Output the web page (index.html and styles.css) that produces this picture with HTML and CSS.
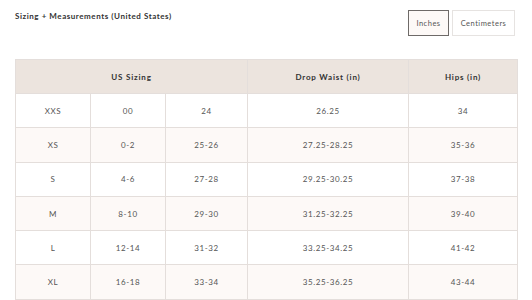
FILE: index.html
```html
<!DOCTYPE html>
<html>
<head>
<meta charset="utf-8">
<link rel="stylesheet" href="styles.css">
</head>
<body>
<div class="page">
  <div class="top">
    <div class="title">Sizing + Measurements (United States)</div>
    <div class="units">
      <button class="unit active">Inches</button>
      <button class="unit">Centimeters</button>
    </div>
  </div>
  <table class="chart">
    <colgroup>
      <col class="c1"><col class="c2"><col class="c3"><col class="c4"><col class="c5">
    </colgroup>
    <thead>
      <tr><th colspan="3">US Sizing</th><th>Drop Waist (in)</th><th>Hips (in)</th></tr>
    </thead>
    <tbody>
      <tr><td>XXS</td><td>00</td><td>24</td><td>26.25</td><td>34</td></tr>
      <tr><td>XS</td><td>0-2</td><td>25-26</td><td>27.25-28.25</td><td>35-36</td></tr>
      <tr><td>S</td><td>4-6</td><td>27-28</td><td>29.25-30.25</td><td>37-38</td></tr>
      <tr><td>M</td><td>8-10</td><td>29-30</td><td>31.25-32.25</td><td>39-40</td></tr>
      <tr><td>L</td><td>12-14</td><td>31-32</td><td>33.25-34.25</td><td>41-42</td></tr>
      <tr><td>XL</td><td>16-18</td><td>33-34</td><td>35.25-36.25</td><td>43-44</td></tr>
    </tbody>
  </table>
</div>
</body>
</html>
```
FILE: styles.css
```css
html, body {
  margin: 0;
  background: #fff;
}
.page {
  padding: 10px 15px 0;
  font-family: Lato, "Open Sans", sans-serif;
  color: #555;
}
.top {
  display: flex;
  justify-content: space-between;
  align-items: flex-start;
  height: 49px;
}
.title {
  font-size: 8px;
  font-weight: 700;
  line-height: 12px;
  color: #333;
  letter-spacing: 0.55px;
}
.units {
  display: flex;
  gap: 3px;
  margin-right: 2px;
}
.unit {
  height: 26px;
  padding: 0;
  font-family: inherit;
  font-size: 7.5px;
  color: #555;
  letter-spacing: 0.5px;
  background: #fff;
  border: 1px solid #e6e3e1;
  border-radius: 0;
}
.unit.active {
  width: 41px;
  border-color: #6e6a68;
  background: #fdf9f7;
}
.unit:not(.active) {
  width: 63px;
}
.chart {
  width: 502px;
  border-collapse: collapse;
  table-layout: fixed;
  font-size: 8px;
  letter-spacing: 0.6px;
}
.c1 { width: 75px; }
.c2 { width: 75px; }
.c3 { width: 82px; }
.c4 { width: 161px; }
.c5 { width: 109px; }
.chart th, .chart td {
  border: 1px solid #e4dedb;
  text-align: center;
  padding: 0;
}
.chart th {
  height: 33px;
  background: #ece4de;
  color: #333;
  font-weight: 700;
  letter-spacing: 0.8px;
}
.chart td {
  height: 33.3px;
  color: #555;
}
.chart tbody tr:nth-child(even) td {
  background: #fdf9f7;
}
```
